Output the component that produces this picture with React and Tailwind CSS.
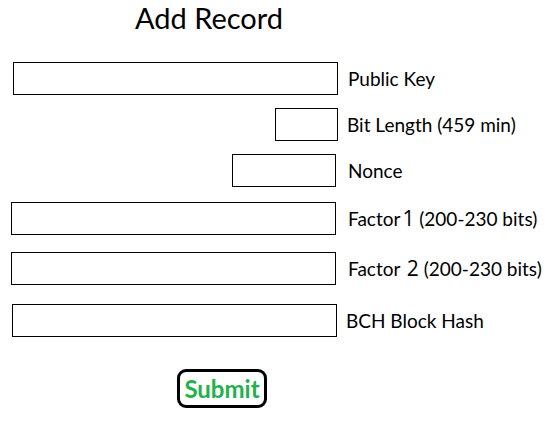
const rows = [
  { label: 'Public Key', mt: 'mt-[28px]', cell: 'pr-0', box: 'w-[325px]', gap: 'ml-[10px]' },
  { label: 'Bit Length (459 min)', mt: 'mt-[13px]', cell: 'pr-0', box: 'w-[63px]', gap: 'ml-[9px]' },
  { label: 'Nonce', mt: 'mt-[13px]', cell: 'pr-[2px]', box: 'w-[104px]', gap: 'ml-[10px]' },
  { label: 'Factor', num: '1', rest: ' (200-230 bits)', mt: 'mt-[15px]', cell: 'pr-[2px]', box: 'w-[325px]', gap: 'ml-[10px]' },
  { label: 'Factor ', num: '2', rest: ' (200-230 bits)', mt: 'mt-[17px]', cell: 'pr-[2px]', box: 'w-[325px]', gap: 'ml-[10px]' },
  { label: 'BCH Block Hash', mt: 'mt-[19px]', cell: 'pr-[1px]', box: 'w-[325px]', gap: 'ml-[8px]' },
];

export default function App() {
  return (
    <div className="w-[549px] h-[428px] bg-white text-black font-['Lato',sans-serif] overflow-hidden">
      {/* Title */}
      <div className="pt-[1px] pl-[135px] text-[29px] leading-[33px]">Add Record</div>

      {/* Form rows */}
      {rows.map((r, i) => (
        <div key={i} className={`flex items-center ${r.mt}`}>
          <div className={`w-[338px] flex justify-end ${r.cell}`}>
            <input className={`${r.box} h-[33px] border border-black bg-white outline-none`} />
          </div>
          <span className={`${r.gap} text-[19px] leading-none whitespace-pre`}>
            {r.label}
            {r.num && <span className="ml-[2px] font-['Open_Sans',sans-serif] text-[21px]">{r.num}</span>}
            {r.rest}
          </span>
        </div>
      ))}

      {/* Submit */}
      <div className="mt-[32px] pl-[177px]">
        <button className="w-[90px] h-[39px] border-[3px] border-black rounded-[9px] flex items-center justify-center text-[24px] font-bold text-[#22b14c] leading-none">
          Submit
        </button>
      </div>
    </div>
  );
}
